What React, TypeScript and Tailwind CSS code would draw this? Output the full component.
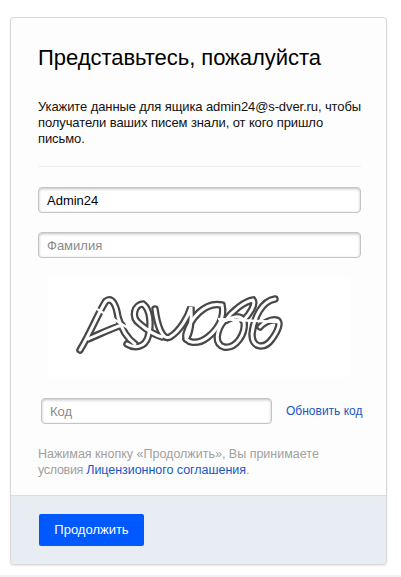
const inputClass =
  "h-[26px] rounded-[4px] border border-[#c4c4c4] bg-white px-2 text-[13px] text-black outline-none shadow-[inset_0_1px_3px_rgba(0,0,0,0.25)] placeholder:text-[#8a8a8a]";

/* captcha strokes, traced from the picture (page coordinates) */
const captchaLines = [
  "M80 351 C90 335 100 310 106 302 C112 298 116 305 118 318 C122 332 128 340 135 345",
  "M88 340 C100 335 110 330 122 326",
  "M127 345 C135 350 145 348 148 338 C152 325 150 310 143 305 C135 305 130 318 140 325 C148 332 155 336 162 338",
  "M155 310 C157 325 162 342 170 338 C180 332 188 318 191 308 C192 322 190 335 186 340",
  "M222 306 C205 302 190 320 186 335 C184 345 198 346 208 338 C218 330 225 318 222 306",
  "M224 322 C216 332 214 345 224 348 C236 350 246 335 244 322 C240 315 232 318 225 322 C232 312 245 302 253 301 C256 305 250 315 243 322",
  "M275 300 C262 302 254 318 252 335 C252 350 265 350 272 340 C278 332 282 322 276 321 C270 320 262 325 260 328",
];

const captchaCuts = ["M97 310 L133 332", "M218 320 L278 323"];

function Captcha() {
  return (
    <svg viewBox="48 278 302 100" className="h-[100px] w-[302px] blur-[0.3px]">
      {captchaLines.map((d, i) => (
        <path key={i} d={d} fill="none" stroke="#484848" strokeWidth="7.5" strokeLinecap="round" />
      ))}
      {captchaLines.map((d, i) => (
        <path key={i} d={d} fill="none" stroke="#fff" strokeWidth="3" strokeLinecap="round" />
      ))}
      {captchaCuts.map((d, i) => (
        <path key={i} d={d} fill="none" stroke="#fff" strokeWidth="2.5" />
      ))}
    </svg>
  );
}

export default function App() {
  return (
    <div className="flex h-[577px] flex-col bg-white font-['Liberation_Sans',Arial,sans-serif]">
      <div className="ml-[10px] mt-[17px] flex h-[548px] w-[377px] flex-col overflow-hidden rounded-[4px] border border-[#d8d8d8] bg-[#fdfdfd] shadow-[0_1px_2px_rgba(0,0,0,0.1)]">
        <div className="flex-1 px-[27px] pt-[26px]">
          <h1 className="text-[22px] leading-[28px] tracking-[-0.04px] text-black">Представьтесь, пожалуйста</h1>
          <p className="mt-[27px] w-[330px] text-[13px] leading-[16px] tracking-[-0.1px] text-[#111]">
            Укажите данные для ящика admin24@s-dver.ru, чтобы получатели ваших писем знали, от кого пришло письмо.
          </p>
          <div className="mt-[19px] h-px w-[323px] bg-[#eeeeee]" />
          <div className="mt-[20px] flex w-[323px] flex-col gap-[19px]">
            <input className={inputClass} defaultValue="Admin24" readOnly />
            <input className={inputClass} placeholder="Фамилия" readOnly />
          </div>
          <div className="ml-[10px] mt-[19px] h-[100px] w-[302px] bg-white">
            <Captcha />
          </div>
          <div className="mt-[21px] flex items-center">
            <input className={`${inputClass} ml-[3px] w-[231px] shrink-0`} placeholder="Код" readOnly />
            <a className="ml-[14px] shrink-0 whitespace-nowrap text-[12px] text-[#1a55c4]">Обновить код</a>
          </div>
          <p className="mt-[22px] whitespace-nowrap text-[12.5px] leading-[16px] text-[#a0a0a0]">
            Нажимая кнопку «Продолжить», Вы принимаете
            <br />
            <span className="tracking-[-0.3px]">условия </span>
            <a className="tracking-[-0.04px] text-[#1a55c4]">Лицензионного соглашения</a>.
          </p>
        </div>
        <div className="flex h-[69px] items-start border-t border-[#d5dfe9] bg-[#e8ecf3] pl-[28px] pt-[18px]">
          <button className="h-[32px] w-[105px] rounded-[2px] bg-[#0059ff] text-[13px] text-white">Продолжить</button>
        </div>
      </div>
      <div className="mt-auto h-[2px] bg-[#f0f0f0]" />
    </div>
  );
}
